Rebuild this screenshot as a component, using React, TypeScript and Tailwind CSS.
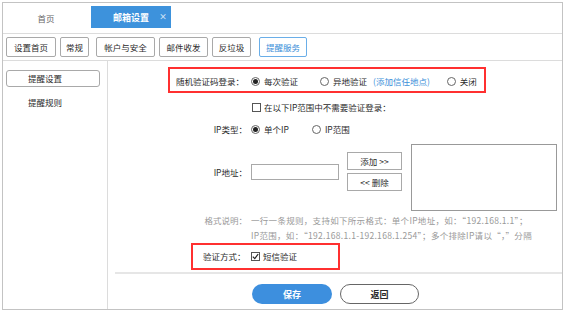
import React from 'react';

const toolbarButtons = [
  { label: '设置首页', className: 'ml-[3px] w-[50px]' },
  { label: '常规', className: 'ml-[4px] w-[29px]' },
  { label: '帐户与安全', className: 'ml-[7px] w-[59px]' },
  { label: '邮件收发', className: 'ml-[4px] w-[49px]' },
  { label: '反垃圾', className: 'ml-[4px] w-[39px]' },
  { label: '提醒服务', className: 'ml-[8px] w-[48px]', active: true },
];

const Radio: React.FC<{ checked?: boolean }> = ({ checked }) => (
  <span className="w-[9px] h-[9px] rounded-full border border-[#666] bg-white flex items-center justify-center shrink-0">
    {checked && <span className="w-[5px] h-[5px] rounded-full bg-[#222]" />}
  </span>
);

const Checkbox: React.FC<{ checked?: boolean }> = ({ checked }) => (
  <span className="w-[9px] h-[9px] border border-[#555] bg-white flex items-center justify-center shrink-0">
    {checked && (
      <svg width="7" height="7" viewBox="0 0 7 7">
        <path d="M0.8 3.6 L2.8 5.6 L6.2 1" fill="none" stroke="#222" strokeWidth="1.2" />
      </svg>
    )}
  </span>
);

export default function App() {
  return (
    <div className="w-[567px] h-[312px] bg-white pt-[2px] pl-[2px] font-['Noto_Sans_CJK_SC',sans-serif] text-[8.5px] text-[#2a2a2a] leading-none">
      <div className="w-[561px] h-[308px] border border-[#c3c3c3] flex flex-col">
        {/* tabs */}
        <div className="h-[31px] border-b border-[#dcdcdc] flex items-start shrink-0">
          <div className="w-[86px] h-[30px] flex items-center justify-center text-[#666]">首页</div>
          <div className="ml-[2px] mt-[3px] w-[80px] h-[22px] bg-[#3d92dc] relative flex items-center justify-center text-white font-bold text-[9px]">
            邮箱设置
            <span className="absolute right-[4px] top-0 h-[22px] flex items-center text-[8px] text-[#cfe3f5]">×</span>
          </div>
        </div>

        {/* toolbar */}
        <div className="h-[27px] border-b border-[#dcdcdc] flex items-center shrink-0">
          {toolbarButtons.map((b) => (
            <div
              key={b.label}
              className={`${b.className} h-[20px] rounded-[2px] border flex items-center justify-center ${
                b.active ? 'border-[#6aaee8] text-[#3b8fd9]' : 'border-[#a9a9a9] text-[#2a2a2a]'
              }`}
            >
              {b.label}
            </div>
          ))}
        </div>

        <div className="flex-1 flex">
          {/* sidebar */}
          <div className="w-[105px] border-r border-[#dcdcdc] shrink-0">
            <div className="mt-[9px] ml-[3px] w-[94px] h-[17px] rounded-[3px] border border-[#a9a9a9] flex items-center pl-[21px]">
              提醒设置
            </div>
            <div className="mt-[7px] h-[17px] flex items-center pl-[25px]">提醒规则</div>
          </div>

          {/* main */}
          <div className="flex-1 flex flex-col">
            <div className="mt-[6px] ml-[60px] w-[318px] h-[26px] border-2 border-[#ff3030] flex items-center pl-[6px] pt-[3px]">
              <span className="w-[75px]">随机验证码登录：</span>
              <Radio checked />
              <span className="ml-[4px]">每次验证</span>
              <span className="ml-[22px]"><Radio /></span>
              <span className="ml-[4px]">异地验证</span>
              <span className="ml-[6px] text-[#3b8fd9]">(添加信任地点)</span>
              <span className="ml-[17px]"><Radio /></span>
              <span className="ml-[4px]">关闭</span>
            </div>

            <div className="mt-[7px] h-[14px] flex items-center pl-[144px]">
              <Checkbox />
              <span className="ml-[3px]">在以下IP范围中不需要验证登录：</span>
            </div>

            <div className="mt-[8px] h-[14px] flex items-center">
              <span className="w-[139px] text-right">IP类型：</span>
              <span className="ml-[4px]"><Radio checked /></span>
              <span className="ml-[4px]">单个IP</span>
              <span className="ml-[23px]"><Radio /></span>
              <span className="ml-[4px]">IP范围</span>
            </div>

            <div className="mt-[8px] h-[67px] flex items-start">
              <span className="w-[139px] mt-[20px] h-[16px] flex items-center justify-end">IP地址：</span>
              <div className="ml-[4px] mt-[20px] w-[88px] h-[16px] border border-[#a9a9a9]" />
              <div className="ml-[8px] mt-[8px] flex flex-col">
                <div className="w-[55px] h-[18px] border border-[#a9a9a9] flex items-center justify-center">添加 &gt;&gt;</div>
                <div className="mt-[3px] w-[55px] h-[18px] border border-[#a9a9a9] flex items-center justify-center">&lt;&lt; 删除</div>
              </div>
              <div className="ml-[9px] w-[146px] h-[67px] border border-[#999]" />
            </div>

            <div className="mt-[2px] flex items-start text-[#999] leading-[15px]">
              <span className="w-[139px] text-right">格式说明：</span>
              <div className="ml-[4px] whitespace-nowrap tracking-[0.3px]">
                <div>一行一条规则，支持如下所示格式：单个IP地址，如：“192.168.1.1”；</div>
                <div>IP范围，如：“192.168.1.1-192.168.1.254”；多个排除IP请以“，”分隔</div>
              </div>
            </div>

            <div className="ml-[83px] w-[149px] h-[27px] border-2 border-[#ff3030] flex items-center">
              <span className="ml-[10px] w-[48px]">验证方式：</span>
              <Checkbox checked />
              <span className="ml-[3px]">短信验证</span>
            </div>

            <div className="mt-[2px] ml-[7px] h-[2px] bg-[#e6e6e6]" />

            <div className="mt-[10px] flex items-center">
              <div className="ml-[144px] w-[80px] h-[20px] rounded-full bg-[#3d8fde] text-white font-bold text-[9px] flex items-center justify-center">
                保存
              </div>
              <div className="ml-[8px] w-[79px] h-[20px] rounded-full border border-[#666] bg-white font-bold text-[9px] flex items-center justify-center">
                返回
              </div>
            </div>
          </div>
        </div>
      </div>
    </div>
  );
}
